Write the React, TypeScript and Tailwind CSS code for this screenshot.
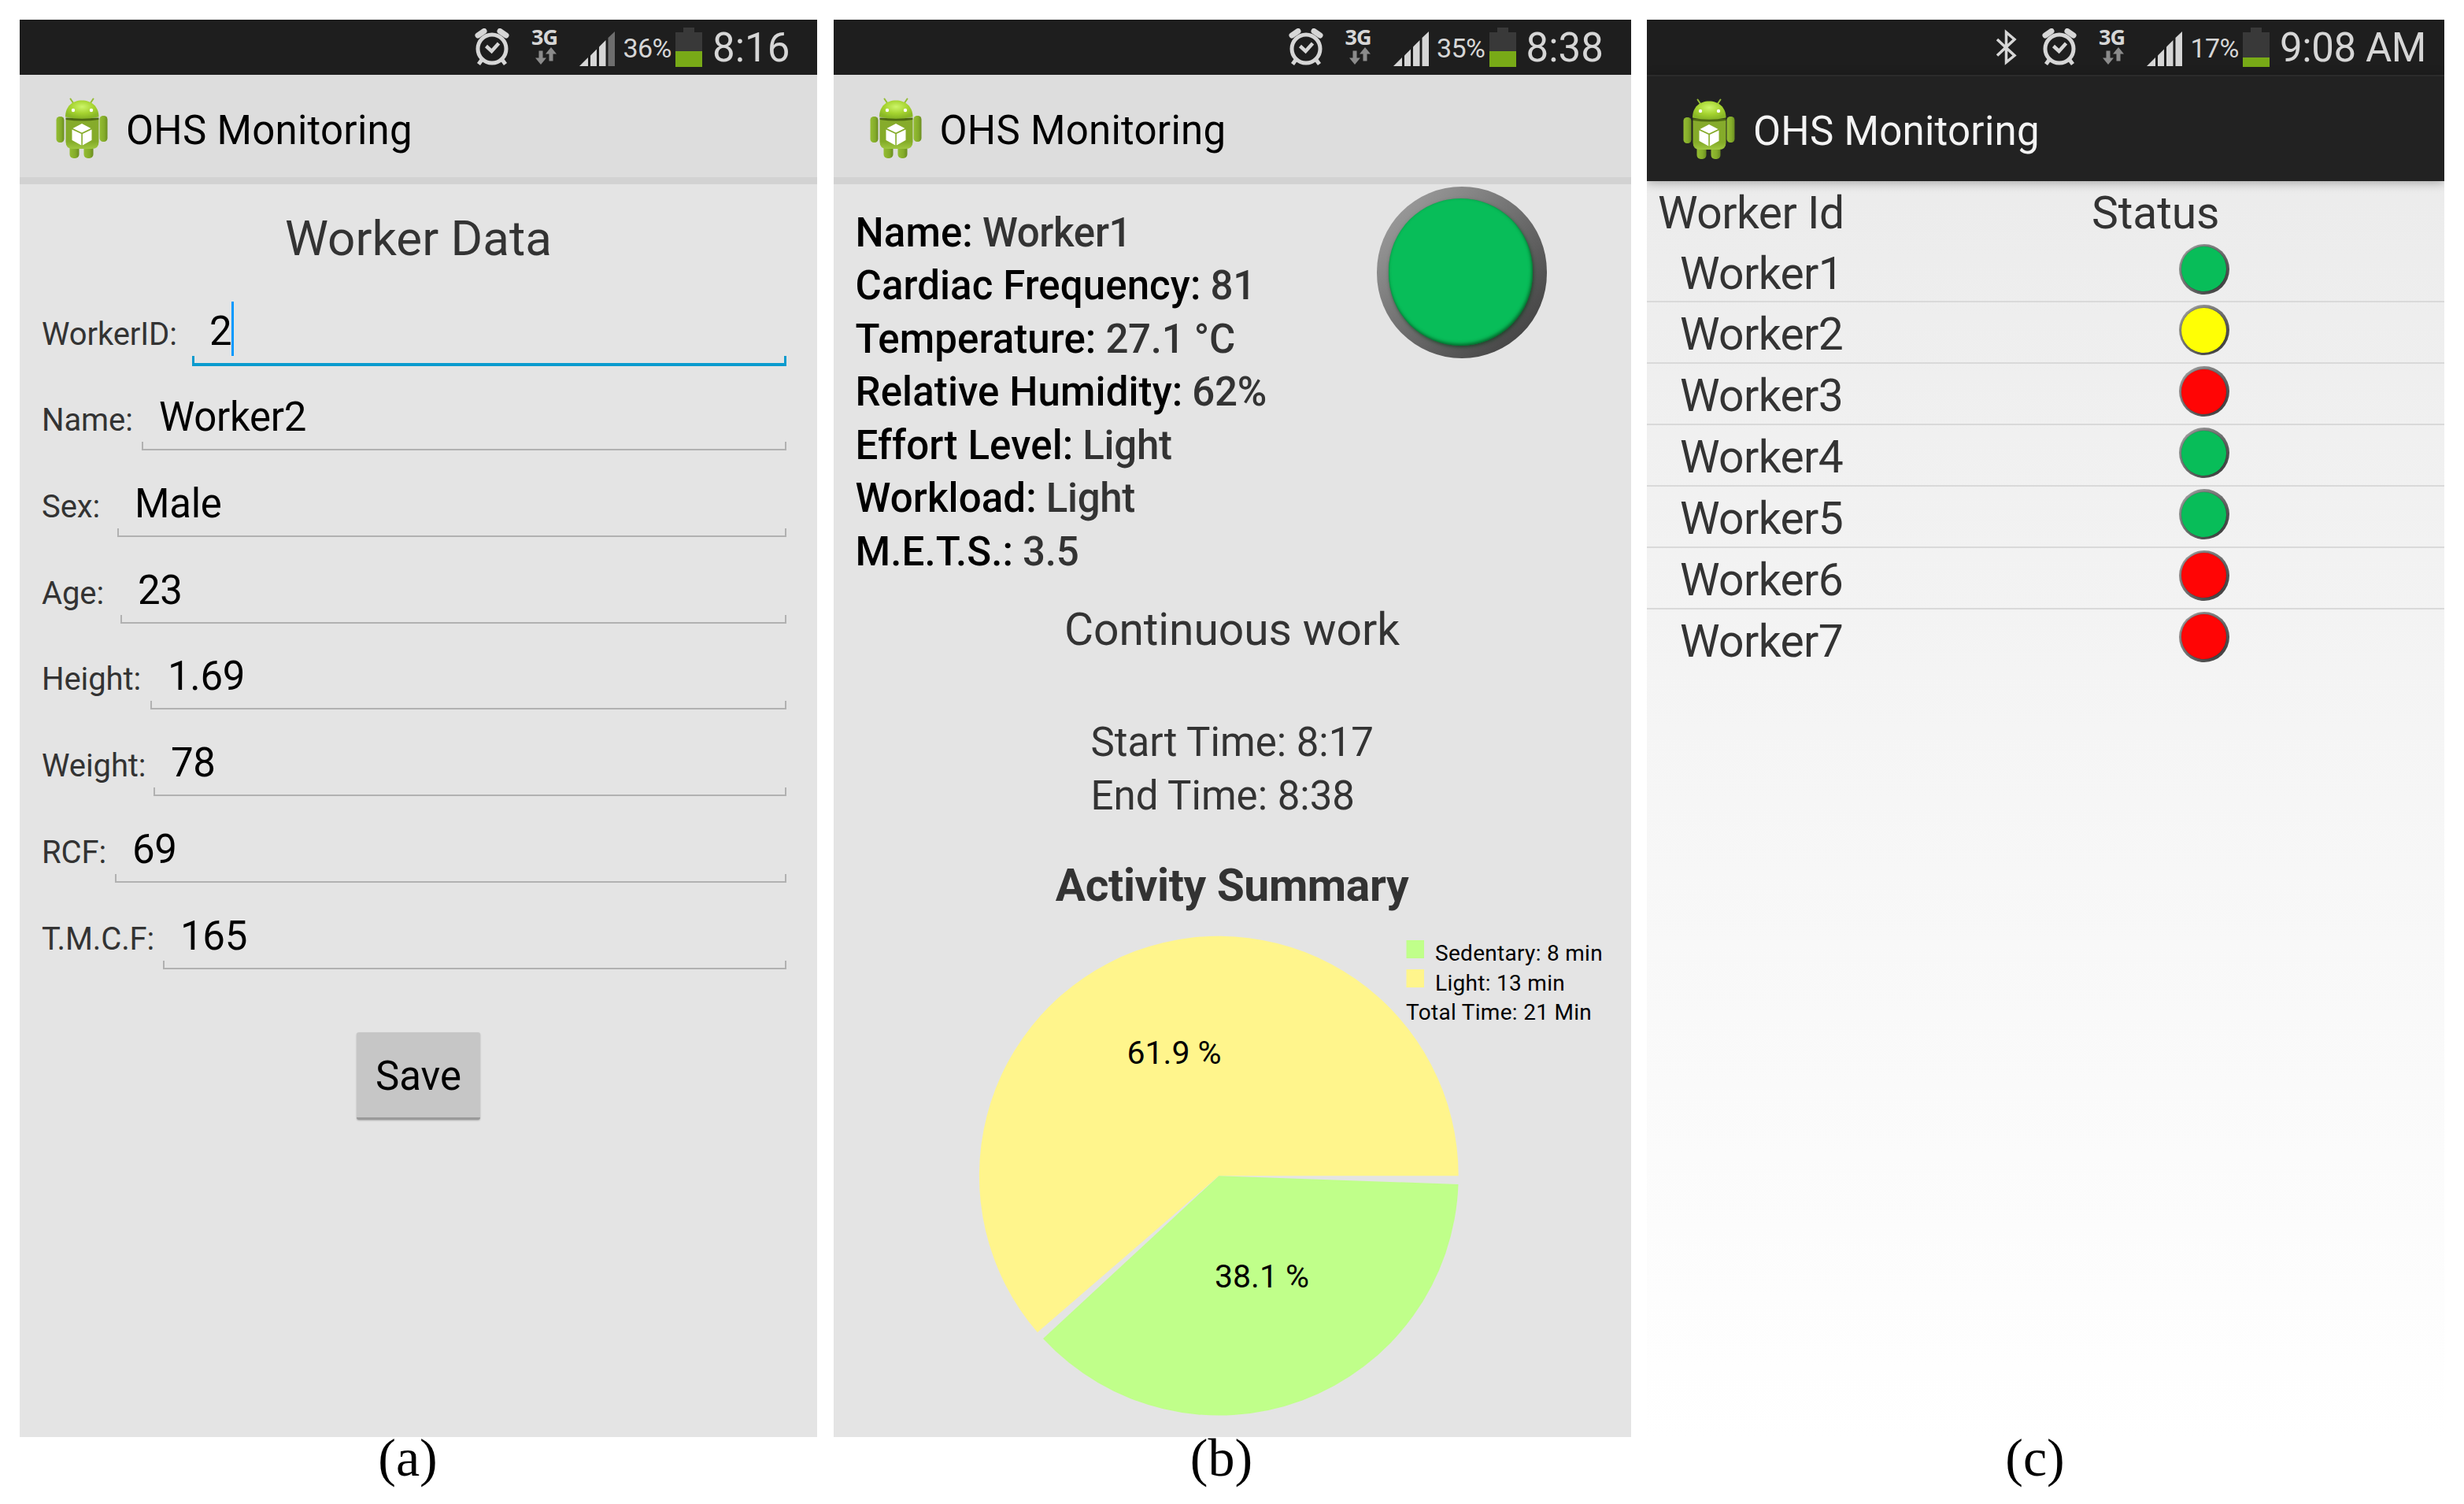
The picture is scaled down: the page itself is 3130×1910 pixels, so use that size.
import type { ReactNode } from "react";

const AndroidIcon = () => (
  <svg viewBox="0 0 66 78" className="h-[78px] w-[66px] shrink-0">
    <defs>
      <radialGradient id="head" cx="0.5" cy="0.35" r="0.6">
        <stop offset="0" stopColor="#cdf56a" />
        <stop offset="0.6" stopColor="#a5d32f" />
        <stop offset="1" stopColor="#8ab827" />
      </radialGradient>
      <linearGradient id="body" x1="0" y1="0" x2="0" y2="1">
        <stop offset="0" stopColor="#86ab2c" />
        <stop offset="0.75" stopColor="#84ab28" />
        <stop offset="1" stopColor="#9fc740" />
      </linearGradient>
      <linearGradient id="limb" x1="0" y1="0" x2="1" y2="0">
        <stop offset="0" stopColor="#94bd33" />
        <stop offset="0.6" stopColor="#84ac2a" />
        <stop offset="1" stopColor="#6a8c20" />
      </linearGradient>
    </defs>
    <path d="M18.5 1.5l4 6M47.5 1.5l-4 6" stroke="#95bd35" strokeWidth="2" strokeLinecap="round" />
    <rect x="17.5" y="60" width="12" height="17" rx="5" fill="url(#limb)" />
    <rect x="35.5" y="60" width="12" height="17" rx="5" fill="url(#limb)" />
    <rect x="0.5" y="24" width="10" height="33" rx="4.5" fill="url(#limb)" />
    <rect x="55.5" y="23" width="10" height="33" rx="4.5" fill="url(#limb)" />
    <path d="M12.5 28h42v28q0 9-9 9h-24q-9 0-9-9z" fill="url(#body)" />
    <path d="M12.5 25.5h42v2.5q-21 3-42 0z" fill="#4e6a12" />
    <path d="M12 24.5C12 11 21 3.5 33 3.5S54.5 11 54.5 24.5Q33 29 12 24.5z" fill="url(#head)" />
    <circle cx="22" cy="16" r="2.2" fill="#fff" />
    <circle cx="45" cy="16" r="2.2" fill="#fff" />
    <path d="M33 33l11.5 6L33 44.5 21.5 39z" fill="#fff" />
    <path d="M20.5 40.5L32.3 46v14.5L20.5 54z" fill="#fff" />
    <path d="M45.5 40.5L33.9 46v14.5L45.5 54z" fill="#fff" />
  </svg>
);

const AlarmIcon = () => (
  <svg viewBox="0 0 45 48" className="h-12 w-[45px] shrink-0" fill="none" stroke="#d6d6d6">
    <circle cx="22" cy="26" r="18" strokeWidth="5" />
    <path d="M14.5 22.5l7 6.5 9-10" strokeWidth="4.5" />
    <path d="M9 40l-4 5.5M35 40l4 5.5" strokeWidth="5" />
    <path d="M4 9l8-5.5M40 9l-8-5.5" strokeWidth="7" strokeLinecap="round" />
  </svg>
);

const BluetoothIcon = () => (
  <svg viewBox="0 0 27 46" className="h-[46px] w-[27px] shrink-0" fill="none" stroke="#d6d6d6" strokeWidth="3.5">
    <path d="M1 13l22 20.5L12.5 42V4L23 13 1 33.5" />
  </svg>
);

const NetworkIcon = () => (
  <div className="flex h-[50px] w-[33px] shrink-0 flex-col">
    <span className="h-[25px] font-['Open_Sans'] text-[27px] leading-[24px] font-bold tracking-[-1px] text-[#d6d6d6]">3G</span>
    <svg viewBox="0 0 33 24" className="h-6 w-[33px]" fill="#8b8b8b">
      <path d="M9.5 4.5h5v9H19L12 22 5 13.5h4.5z" />
      <path d="M22.5 17.5h5v-9H32L25 0l-7 8.5h4.5z" />
    </svg>
  </div>
);

const SignalIcon = ({ full }: { full: boolean }) => (
  <svg viewBox="0 0 45 45" className="h-[45px] w-[45px] shrink-0" fill="#d6d6d6">
    <path d="M0 44L11 33v11z" />
    <path d="M14 30.5L22 22.5V44h-8z" />
    <path d="M25 19.5L33.5 11V44H25z" />
    <path d="M36.5 8L45 0v44h-8.5z" fill={full ? "#d6d6d6" : "#6e6e6e"} />
  </svg>
);

const BatteryIcon = ({ level }: { level: number }) => (
  <svg viewBox="0 0 34 50" className="h-[50px] w-[34px] shrink-0">
    <path d="M10 0h14v6h10v44H0V6h10z" fill="#393939" />
    <rect x="0" y={50 - level} width="34" height={level} fill="#78aa17" />
  </svg>
);

type PhoneProps = {
  time: string;
  percent: string;
  level: number;
  fullSignal?: boolean;
  dark?: boolean;
  caption: string;
  children: ReactNode;
};

const Phone = ({ time, percent, level, fullSignal = true, dark = false, caption, children }: PhoneProps) => (
  <figure className="flex w-[1013px] shrink-0 flex-col">
    <div
      className={
        dark
          ? "flex h-[1800px] flex-col overflow-hidden bg-linear-to-b from-[#e9e9e9] via-[#f5f5f5] to-white"
          : "flex h-[1800px] flex-col overflow-hidden bg-[#e4e4e4]"
      }
    >
      {/* Status bar */}
      <div className="flex h-[70px] shrink-0 items-center justify-end bg-[#1e1e1e] text-[#d6d6d6]">
        {dark && (
          <div className="mr-[31px]">
            <BluetoothIcon />
          </div>
        )}
        <AlarmIcon />
        <div className="mr-7 ml-[27px]">
          <NetworkIcon />
        </div>
        <div className="pt-[4px]">
          <SignalIcon full={fullSignal} />
        </div>
        <span className="w-[77px] shrink-0 pt-[2px] pr-[5px] text-right text-[34px] leading-[40px] tracking-[-0.5px]">{percent}</span>
        <BatteryIcon level={level} />
        <span
          className={
            dark
              ? "w-[222px] shrink-0 pt-px pl-[13px] text-[51px] leading-[70px] tracking-[-0.4px]"
              : "w-[146px] shrink-0 pt-px pl-[13px] text-[51px] leading-[70px]"
          }
        >
          {time}
        </span>
      </div>

      {/* Action bar */}
      <div
        className={
          dark
            ? "flex h-[135px] shrink-0 items-center border-t-2 border-[#2b2b2b] bg-[#222] pb-[5px] pl-[46px] text-[#f3f3f3] shadow-[0_2px_12px_rgba(0,0,0,0.3)]"
            : "flex h-[139px] shrink-0 items-center border-b-[9px] border-[#d2d2d2] bg-[#dddddd] pl-[46px] text-black"
        }
      >
        <div className="pt-[5px]">
          <AndroidIcon />
        </div>
        <span className="pt-[11px] pl-[23px] text-[51px] leading-[60px] tracking-[0.25px]">OHS Monitoring</span>
      </div>
      {children}
    </div>
    <figcaption className="pr-[27px] text-center font-['Liberation_Serif'] text-[68px] leading-[52px] text-black">{caption}</figcaption>
  </figure>
);

const fields = [
  { label: "WorkerID:", value: "2", width: "w-[191px]", focused: true },
  { label: "Name:", value: "Worker2", width: "w-[127px]" },
  { label: "Sex:", value: "Male", width: "w-[96px]" },
  { label: "Age:", value: "23", width: "w-[100px]" },
  { label: "Height:", value: "1.69", width: "w-[138px]" },
  { label: "Weight:", value: "78", width: "w-[142px]" },
  { label: "RCF:", value: "69", width: "w-[93px]" },
  { label: "T.M.C.F:", value: "165", width: "w-[154px]" },
];

const WorkerForm = () => (
  <div className="flex flex-col">
    <h1 className="h-[121px] pt-[18px] text-center text-[62px] leading-[102px] text-[#333]">Worker Data</h1>
    {fields.map((f) => (
      <div key={f.label} className="flex h-[109.7px] items-end pr-[39px] pl-[28px]">
        <label className={`${f.width} shrink-0 text-[40px] leading-[80px] tracking-[-0.1px] whitespace-nowrap text-[#333]`}>{f.label}</label>
        <div className="relative flex h-[88px] flex-1 items-center pl-[22px] text-[51px] leading-[88px] tracking-[-0.3px] text-black">
          {f.value}
          {f.focused && <span className="mb-[6px] h-[69px] w-[3px] bg-[#0099ff]" />}
          <span
            className={
              f.focused
                ? "absolute inset-x-0 bottom-0 h-[13px] border-x-[3px] border-b-4 border-[#0a9bce]"
                : "absolute inset-x-0 bottom-[2px] h-[11px] border-x-2 border-b-2 border-[#b1b1b1]"
            }
          />
        </div>
      </div>
    ))}
    <button className="mt-[78px] h-[111px] w-[157px] self-center rounded-[3px] border-b-[3px] border-[#9a9a9a] bg-[#c6c6c6] pt-[4px] text-[51px] leading-[104px] text-black shadow-[0_1px_2px_rgba(0,0,0,0.25)]">
      Save
    </button>
  </div>
);

const readings = [
  ["Name:", "Worker1"],
  ["Cardiac Frequency:", "81"],
  ["Temperature:", "27.1 °C"],
  ["Relative Humidity:", "62%"],
  ["Effort Level:", "Light"],
  ["Workload:", "Light"],
  ["M.E.T.S.:", "3.5"],
];

const ActivityChart = () => (
  <svg viewBox="0 0 1013 660" className="h-[660px] w-[1013px] shrink-0">
    <path d="M489.3 328.2L793.7 328.2A304.4 304.4 0 1 0 258.9 527.1z" fill="#fff58c" />
    <path d="M489.3 328.2L793.5 339A304.4 304.4 0 0 1 266 535z" fill="#c0ff8a" />
    <text x="372.500" y="186" fontSize="41">61.9 %</text>
    <text x="484" y="470" fontSize="41">38.1 %</text>
    <rect x="727.5" y="29" width="22.5" height="23" fill="#c0ff8a" />
    <rect x="727.5" y="66" width="22.5" height="23" fill="#fff58c" />
    <g fontSize="28" letterSpacing="0.3">
      <text x="764" y="55">Sedentary: 8 min</text>
      <text x="764" y="92.5">Light: 13 min</text>
      <text x="727" y="129.5">Total Time: 21 Min</text>
    </g>
  </svg>
);

const WorkerReport = () => (
  <div className="flex flex-col text-[#333]">
    <div className="flex h-[499px] justify-between">
      <dl className="pt-[27.5px] pl-[28px] text-[51px] leading-[67.5px] font-medium">
        {readings.map(([name, value]) => (
          <div key={name} className="flex gap-[12px]">
            <dt className="tracking-[0.1px] text-black">{name}</dt>
            <dd className="tracking-[-0.3px]">{value}</dd>
          </div>
        ))}
      </dl>
      <div className="mt-[3px] mr-[107px] flex h-[218px] w-[216px] items-center justify-center rounded-full bg-linear-to-br from-[#a8a8a8] via-[#6e6e6e] to-[#383838]">
        <div className="mr-[2px] mb-[2px] h-[187px] w-[183px] rounded-full bg-[#08bd59] shadow-[inset_-1px_-2px_4px_rgba(0,60,20,0.7),1px_2px_4px_rgba(0,60,20,0.6)]" />
      </div>
    </div>
    <h2 className="mt-[27px] text-center text-[57px] leading-[80px] tracking-[-0.1px]">Continuous work</h2>
    <div className="mt-[69px] pl-[327px] text-[51px] leading-[68px]">
      <p>Start Time: 8:17</p>
      <p>End Time: 8:38</p>
    </div>
    <h2 className="mt-[40px] text-center text-[57px] leading-[80px] font-bold tracking-[-0.4px]">Activity Summary</h2>
    <ActivityChart />
  </div>
);

const workers = [
  { id: "Worker1", color: "bg-[#08bd59]" },
  { id: "Worker2", color: "bg-[#ffff05]" },
  { id: "Worker3", color: "bg-[#ff0505]" },
  { id: "Worker4", color: "bg-[#08bd59]" },
  { id: "Worker5", color: "bg-[#08bd59]" },
  { id: "Worker6", color: "bg-[#ff0505]" },
  { id: "Worker7", color: "bg-[#ff0505]" },
];

const WorkerList = () => (
  <div className="flex flex-col text-[57px] text-[#333]">
    <div className="flex h-[76.5px] pt-[6px] leading-[70px]">
      <span className="w-[565px] pl-[14px] tracking-[-0.5px]">Worker Id</span>
      <span className="tracking-[-0.1px]">Status</span>
    </div>
    {workers.map((w) => (
      <div key={w.id} className="flex h-[77.9px] items-start border-b-2 border-[#d9d9d9] last:border-b-0">
        <span className="w-[675.5px] pl-[42px] leading-[82px] tracking-[-0.6px]">{w.id}</span>
        <span className="mt-[3px] flex h-16 w-16 items-center justify-center rounded-full bg-linear-to-br from-[#a9a9a9] via-[#707070] to-[#333]">
          <span className={`${w.color} h-[57px] w-[57px] rounded-full shadow-[0_0_2px_rgba(0,0,0,0.5)]`} />
        </span>
      </div>
    ))}
  </div>
);

const App = () => {
  return (
    <main className="flex h-[1910px] w-[3130px] gap-[20.5px] overflow-hidden bg-white pt-[25px] pl-[25px] font-[Roboto,sans-serif]">
      <Phone time="8:16" percent="36%" level={20} fullSignal={false} caption="(a)">
        <WorkerForm />
      </Phone>
      <Phone time="8:38" percent="35%" level={20} caption="(b)">
        <WorkerReport />
      </Phone>
      <Phone time="9:08 AM" percent="17%" level={12} dark caption="(c)">
        <WorkerList />
      </Phone>
    </main>
  );
};

export default App;
